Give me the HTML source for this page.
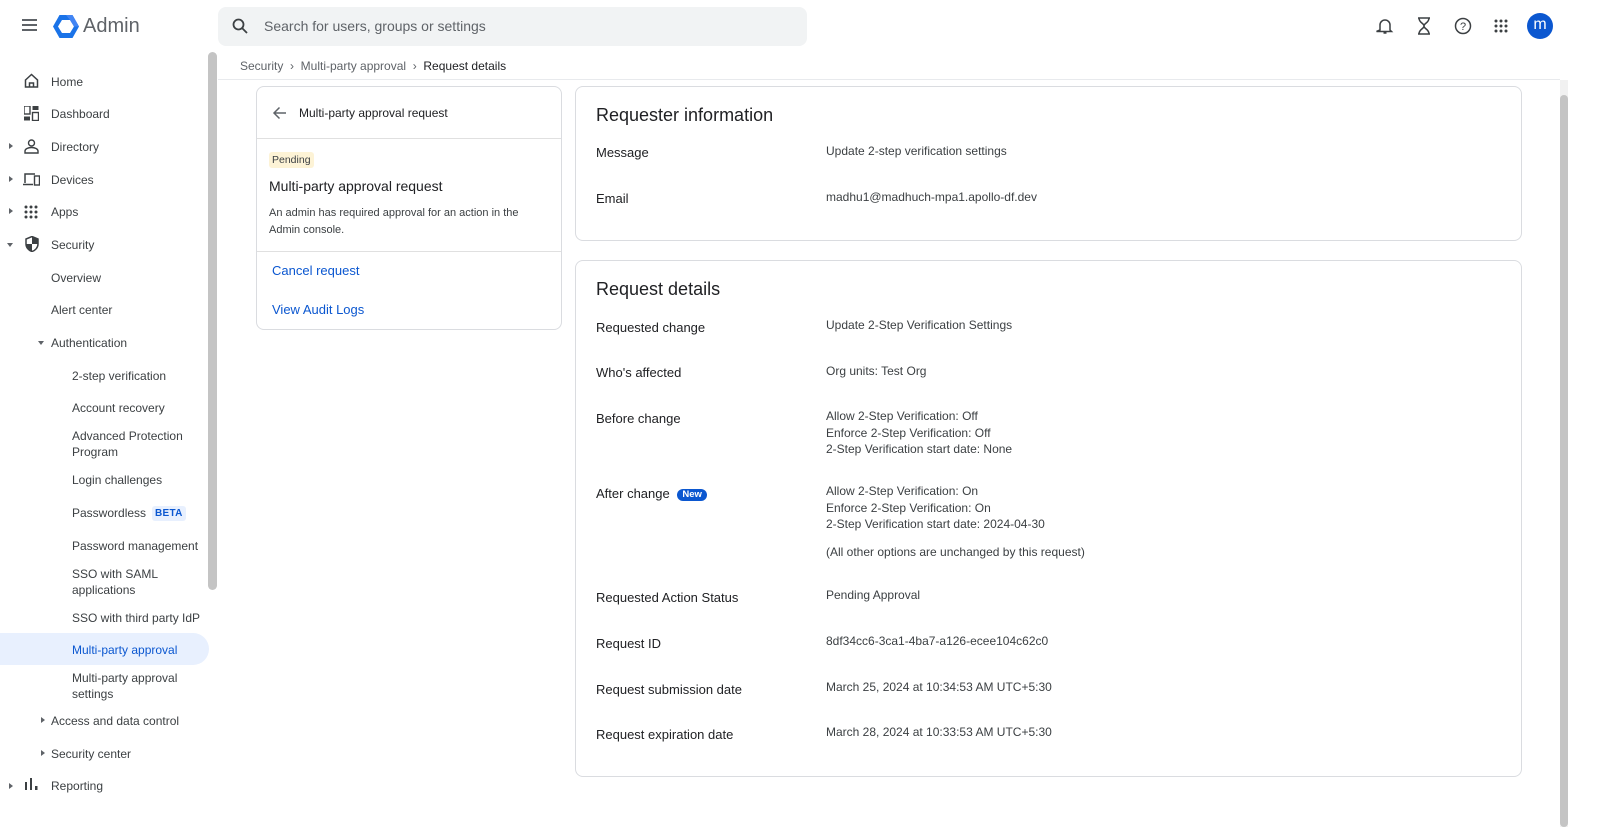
<!DOCTYPE html>
<html><head><meta charset="utf-8"><style>
*{box-sizing:border-box;margin:0;padding:0}
body{width:1600px;height:827px;overflow:hidden;background:#fff;font-family:"Liberation Sans",Arial,sans-serif;color:#202124;position:relative}
.a{position:absolute}
.nav{font-size:12px;color:#3c4043;white-space:nowrap}
.sub{font-size:12px;color:#3c4043;line-height:16px}
.card{position:absolute;border:1px solid #dadce0;border-radius:8px;background:#fff}
.lbl{position:absolute;left:20px;font-size:13px;color:#202124}
.val{position:absolute;left:250px;font-size:12px;color:#3c4043;line-height:16.5px}
.tri{position:absolute;width:0;height:0;border-top:3.5px solid transparent;border-bottom:3.5px solid transparent;border-left:4px solid #5f6368}
.trid{position:absolute;width:0;height:0;border-left:3.5px solid transparent;border-right:3.5px solid transparent;border-top:4px solid #5f6368}
</style></head><body>
<div class="a" style="left:22px;top:19px;width:15px;height:2px;background:#5f6368;box-shadow:0 5px 0 #5f6368,0 10px 0 #5f6368"></div>
<svg class="a" style="left:53px;top:15px" width="26" height="23" viewBox="0 0 26 23"><polygon points="6.5,0 19.5,0 26,11.5 19.5,23 6.5,23 0,11.5" fill="#1a73e8"/><polygon points="9,5 17,5 21,11.5 17,18 9,18 5,11.5" fill="#fff"/><polygon points="13,0 19.5,0 26,11.5 21,11.5 17,5" fill="#4285f4"/></svg>
<div class="a" style="left:83px;top:15px;font-size:20px;color:#5f6368">Admin</div>
<div class="a" style="left:218px;top:7px;width:589px;height:39px;background:#f1f3f4;border-radius:8px"></div>
<svg class="a" style="left:232px;top:18px" width="16" height="16" viewBox="0 0 16 16"><circle cx="6.5" cy="6.5" r="5" fill="none" stroke="#3c4043" stroke-width="1.8"/><line x1="10" y1="10" x2="15" y2="15" stroke="#3c4043" stroke-width="1.8"/></svg>
<div class="a" style="left:264px;top:18px;font-size:14px;color:#5f6368">Search for users, groups or settings</div>
<svg class="a" style="left:1376px;top:17px" width="18" height="18" viewBox="0 0 18 18"><path d="M4 13V8a5 5 0 0 1 10 0v5l1.5 1.5h-15z M7.5 16h3" fill="none" stroke="#3c4043" stroke-width="1.5"/></svg>
<svg class="a" style="left:1416px;top:17px" width="16" height="18" viewBox="0 0 16 18"><path d="M2 1h12M2 17h12M3 1c0 5 5 5 5 8s-5 3-5 8M13 1c0 5-5 5-5 8s5 3 5 8" fill="none" stroke="#3c4043" stroke-width="1.5"/></svg>
<svg class="a" style="left:1454px;top:17px" width="18" height="18" viewBox="0 0 18 18"><circle cx="9" cy="9" r="7.5" fill="none" stroke="#3c4043" stroke-width="1.5"/><text x="9" y="13" font-size="11" text-anchor="middle" fill="#3c4043" font-family="Liberation Sans">?</text></svg>
<svg class="a" style="left:1494px;top:19px" width="14" height="14" viewBox="0 0 14 14" fill="#3c4043"><circle cx="2" cy="2" r="1.5"/><circle cx="7" cy="2" r="1.5"/><circle cx="12" cy="2" r="1.5"/><circle cx="2" cy="7" r="1.5"/><circle cx="7" cy="7" r="1.5"/><circle cx="12" cy="7" r="1.5"/><circle cx="2" cy="12" r="1.5"/><circle cx="7" cy="12" r="1.5"/><circle cx="12" cy="12" r="1.5"/></svg>
<div class="a" style="left:1527px;top:13px;width:26px;height:26px;border-radius:50%;background:#0b57d0;color:#fff;font-size:16px;text-align:center;line-height:24px">m</div>
<div class="a" style="left:218px;top:79px;width:1342px;height:1px;background:#e8eaed"></div>
<div class="a" style="left:240px;top:59px;font-size:12px;color:#5f6368">Security &nbsp;›&nbsp; Multi-party approval &nbsp;›&nbsp; <span style="color:#202124">Request details</span></div>
<div class="a" style="left:208px;top:52px;width:9px;height:538px;background:#c4c4c4;border-radius:5px"></div>
<div class="a" style="left:1560px;top:80px;width:8px;height:747px;background:#f1f1f1"></div>
<div class="a" style="left:1560px;top:95px;width:8px;height:732px;background:#c4c4c4;border-radius:4px"></div>
<svg class="a" style="left:24px;top:73px" width="15" height="15" viewBox="0 0 15 15"><path d="M1.5 7L7.5 1.5 13.5 7V14h-12z M5.5 14V10h4v4" fill="none" stroke="#3c4043" stroke-width="1.5"/></svg>
<div class="a nav" style="left:51px;top:75px">Home</div>
<svg class="a" style="left:24px;top:106px" width="15" height="15" viewBox="0 0 15 15" fill="#3c4043"><rect x="0" y="0" width="6" height="8" fill="none" stroke="#3c4043" stroke-width="1.4"/><rect x="8.5" y="0" width="6" height="4"/><rect x="0" y="10.5" width="6" height="4"/><rect x="8.5" y="6.5" width="6" height="8" fill="none" stroke="#3c4043" stroke-width="1.4"/></svg>
<div class="a nav" style="left:51px;top:107px">Dashboard</div>
<div class="tri" style="left:9px;top:143px"></div>
<svg class="a" style="left:24px;top:139px" width="15" height="15" viewBox="0 0 15 15"><circle cx="7.5" cy="4" r="3" fill="none" stroke="#3c4043" stroke-width="1.4"/><path d="M1 14v-2c0-2 3-3.5 6.5-3.5S14 10 14 12v2z" fill="none" stroke="#3c4043" stroke-width="1.4"/></svg>
<div class="a nav" style="left:51px;top:140px">Directory</div>
<div class="tri" style="left:9px;top:176px"></div>
<svg class="a" style="left:23px;top:172px" width="17" height="15" viewBox="0 0 17 15"><path d="M2 11V2h10M0 12.5h10" fill="none" stroke="#3c4043" stroke-width="1.5"/><rect x="11.5" y="4" width="5" height="9" fill="none" stroke="#3c4043" stroke-width="1.4"/></svg>
<div class="a nav" style="left:51px;top:173px">Devices</div>
<div class="tri" style="left:9px;top:208px"></div>
<svg class="a" style="left:24px;top:205px" width="14" height="14" viewBox="0 0 14 14" fill="#3c4043"><circle cx="2" cy="2" r="1.5"/><circle cx="7" cy="2" r="1.5"/><circle cx="12" cy="2" r="1.5"/><circle cx="2" cy="7" r="1.5"/><circle cx="7" cy="7" r="1.5"/><circle cx="12" cy="7" r="1.5"/><circle cx="2" cy="12" r="1.5"/><circle cx="7" cy="12" r="1.5"/><circle cx="12" cy="12" r="1.5"/></svg>
<div class="a nav" style="left:51px;top:205px">Apps</div>
<div class="trid" style="left:7px;top:243px"></div>
<svg class="a" style="left:25px;top:236px" width="14" height="16" viewBox="0 0 14 16"><path d="M7 .5L13 3v5c0 3.5-2.6 6.5-6 7.5C3.6 14.5 1 11.5 1 8V3z" fill="none" stroke="#3c4043" stroke-width="1.5"/><path d="M7 .5L13 3v5H7zM7 8v7.5C3.6 14.5 1 11.5 1 8z" fill="#3c4043"/></svg>
<div class="a nav" style="left:51px;top:238px">Security</div>
<div class="a nav" style="left:51px;top:271px">Overview</div>
<div class="a nav" style="left:51px;top:303px">Alert center</div>
<div class="trid" style="left:38px;top:341px"></div>
<div class="a nav" style="left:51px;top:336px">Authentication</div>
<div class="a sub" style="left:72px;top:368px">2-step verification</div>
<div class="a sub" style="left:72px;top:400px">Account recovery</div>
<div class="a sub" style="left:72px;top:428px">Advanced Protection<br>Program</div>
<div class="a sub" style="left:72px;top:472px">Login challenges</div>
<div class="a sub" style="left:72px;top:505px">Passwordless</div>
<div class="a" style="left:152px;top:506px;padding:1px 3px;background:#e8f0fe;color:#0b57d0;font-size:10px;font-weight:bold;border-radius:3px;letter-spacing:.3px;line-height:13px">BETA</div>
<div class="a sub" style="left:72px;top:538px">Password management</div>
<div class="a sub" style="left:72px;top:566px">SSO with SAML<br>applications</div>
<div class="a sub" style="left:72px;top:610px">SSO with third party IdP</div>
<div class="a" style="left:0;top:633px;width:209px;height:32px;background:#e8f0fe;border-radius:0 16px 16px 0"></div>
<div class="a sub" style="left:72px;top:642px;color:#0b57d0">Multi-party approval</div>
<div class="a sub" style="left:72px;top:670px">Multi-party approval<br>settings</div>
<div class="tri" style="left:41px;top:717px"></div>
<div class="a nav" style="left:51px;top:714px">Access and data control</div>
<div class="tri" style="left:41px;top:750px"></div>
<div class="a nav" style="left:51px;top:747px">Security center</div>
<div class="tri" style="left:9px;top:783px"></div>
<svg class="a" style="left:25px;top:778px" width="13" height="12" viewBox="0 0 13 12" fill="#3c4043"><rect x="0" y="4" width="2" height="8"/><rect x="5" y="0" width="2" height="12"/><rect x="10" y="8" width="2.5" height="4"/></svg>
<div class="a nav" style="left:51px;top:779px">Reporting</div>
<div class="card" style="left:256px;top:86px;width:306px;height:244px">
  <svg class="a" style="left:15px;top:19px" width="15" height="14" viewBox="0 0 15 14"><path d="M14 7H2M7.5 1.5L2 7l5.5 5.5" fill="none" stroke="#5f6368" stroke-width="1.5"/></svg>
  <div class="a" style="left:42px;top:19px;font-size:12px;color:#202124">Multi-party approval request</div>
  <div class="a" style="left:0;top:51px;width:304px;height:1px;background:#e0e0e0"></div>
  <div class="a" style="left:12px;top:65px;padding:2px 3px;background:#fdf3d6;border-radius:3px;font-size:10.5px;color:#3c4043">Pending</div>
  <div class="a" style="left:12px;top:91px;font-size:14px;color:#202124">Multi-party approval request</div>
  <div class="a" style="left:12px;top:118px;font-size:11px;color:#3c4043;line-height:16.5px;width:272px">An admin has required approval for an action in the Admin console.</div>
  <div class="a" style="left:0;top:164px;width:304px;height:1px;background:#e0e0e0"></div>
  <div class="a" style="left:15px;top:176px;font-size:13px;color:#0b57d0">Cancel request</div>
  <div class="a" style="left:15px;top:215px;font-size:13px;color:#0b57d0">View Audit Logs</div>
</div>
<div class="card" style="left:575px;top:86px;width:947px;height:155px">
  <div class="a" style="left:20px;top:18px;font-size:18px;color:#202124">Requester information</div>
  <div class="lbl" style="top:58px">Message</div><div class="val" style="top:56px">Update 2-step verification settings</div>
  <div class="lbl" style="top:104px">Email</div><div class="val" style="top:102px">madhu1@madhuch-mpa1.apollo-df.dev</div>
</div>
<div class="card" style="left:575px;top:260px;width:947px;height:517px">
  <div class="a" style="left:20px;top:18px;font-size:18px;color:#202124">Request details</div>
  <div class="lbl" style="top:59px">Requested change</div><div class="val" style="top:56px">Update 2-Step Verification Settings</div>
  <div class="lbl" style="top:104px">Who's affected</div><div class="val" style="top:102px">Org units: Test Org</div>
  <div class="lbl" style="top:150px">Before change</div><div class="val" style="top:147px">Allow 2-Step Verification: Off<br>Enforce 2-Step Verification: Off<br>2-Step Verification start date: None</div>
  <div class="lbl" style="top:225px">After change <span style="display:inline-block;margin-left:4px;padding:0 5px;background:#0b57d0;color:#fff;font-size:9.5px;font-weight:bold;border-radius:7px;line-height:12px;vertical-align:1px">New</span></div>
  <div class="val" style="top:222px">Allow 2-Step Verification: On<br>Enforce 2-Step Verification: On<br>2-Step Verification start date: 2024-04-30</div>
  <div class="val" style="top:283px">(All other options are unchanged by this request)</div>
  <div class="lbl" style="top:329px">Requested Action Status</div><div class="val" style="top:326px">Pending Approval</div>
  <div class="lbl" style="top:375px">Request ID</div><div class="val" style="top:372px">8df34cc6-3ca1-4ba7-a126-ecee104c62c0</div>
  <div class="lbl" style="top:421px">Request submission date</div><div class="val" style="top:418px">March 25, 2024 at 10:34:53 AM UTC+5:30</div>
  <div class="lbl" style="top:466px">Request expiration date</div><div class="val" style="top:463px">March 28, 2024 at 10:33:53 AM UTC+5:30</div>
</div>
</body></html>
